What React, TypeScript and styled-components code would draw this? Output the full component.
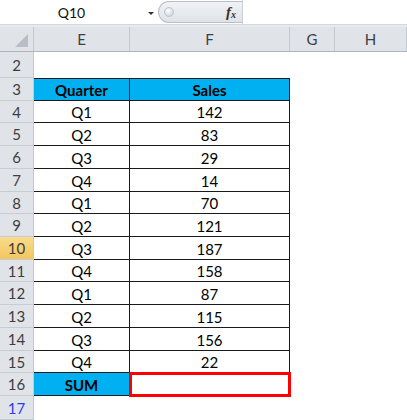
import React from "react";
import styled, { createGlobalStyle } from "styled-components";

const GlobalStyle = createGlobalStyle`
  html, body { margin: 0; padding: 0; background: #ffffff; }
  body { font-family: Lato, "Open Sans", sans-serif; overflow: hidden; }
  * { box-sizing: border-box; }
`;

const Page = styled.div`
  width: 407px;
  height: 420px;
  overflow: hidden;
  background: #ffffff;
  display: flex;
  flex-direction: column;
`;

const FormulaBar = styled.div`
  height: 25px;
  display: flex;
  align-items: stretch;
  border-bottom: 1px solid #d3d8de;
  background: #ffffff;
`;

const NameBox = styled.div`
  width: 143px;
  display: flex;
  align-items: center;
  justify-content: center;
  font-size: 14px;
  color: #111;
  padding-top: 1px;
`;

const Dropdown = styled.div`
  width: 15px;
  display: flex;
  align-items: center;
  justify-content: center;
  &::after {
    content: "";
    border-left: 3px solid transparent;
    border-right: 3px solid transparent;
    border-top: 3px solid #333;
    margin-top: 2px;
  }
`;

const Capsule = styled.div`
  width: 84px;
  margin: 1px 0 1px 0;
  border-radius: 12px 0 0 12px;
  background: linear-gradient(#f0f2f5, #dfe3e8);
  border: 1px solid #b9bfc7;
  border-right: none;
  display: flex;
  align-items: center;
  justify-content: space-between;
  padding: 0 6px 0 5px;
`;

const Knob = styled.div`
  width: 10px;
  height: 10px;
  border-radius: 50%;
  background: radial-gradient(circle at 40% 35%, #ffffff, #c4c9cf);
  border: 1px solid #bfc4ca;
`;

const Fx = styled.span`
  font-family: "Liberation Serif", serif;
  font-style: italic;
  font-weight: bold;
  font-size: 15px;
  color: #333;
  & sub {
    font-size: 10px;
    vertical-align: -1px;
  }
`;

const FormulaInput = styled.div`
  flex: 1;
  border-left: 1px solid #c9ced5;
`;

const Gap = styled.div`
  height: 2px;
  background: #e7ebf0;
`;

const COLS = "34px 96px 160px 45px 1fr";

const HeaderRow = styled.div`
  display: grid;
  grid-template-columns: ${COLS};
  height: 25px;
  background: #e0e4e9;
  border-bottom: 1px solid #aeb5be;
`;

const Corner = styled.div`
  position: relative;
  border-right: 1px solid #c3c9d1;
  &::after {
    content: "";
    position: absolute;
    right: 5px;
    bottom: 4px;
    width: 0;
    height: 0;
    border-left: 13px solid transparent;
    border-bottom: 13px solid #b9bec5;
  }
`;

const ColHead = styled.div`
  display: flex;
  align-items: center;
  justify-content: center;
  font-size: 15px;
  color: #3a3f45;
  border-right: 1px solid #c3c9d1;
`;

const Row = styled.div<{ $h: number }>`
  display: grid;
  grid-template-columns: ${COLS};
  height: ${(p) => p.$h}px;
`;

const RowHead = styled.div<{ $active?: boolean; $blue?: boolean }>`
  display: flex;
  align-items: center;
  justify-content: center;
  font-size: 15px;
  color: ${(p) => (p.$blue ? "#2b3cf0" : "#3d3d3d")};
  background: ${(p) =>
    p.$active ? "linear-gradient(#f9dc8c, #f3c660)" : "#e0e4e9"};
  border-right: 1px solid #c3c9d1;
  border-bottom: 1px solid #c6ccd3;
`;

const Cell = styled.div<{
  $table?: boolean;
  $first?: boolean;
  $blue?: boolean;
  $bold?: boolean;
  $selected?: boolean;
}>`
  position: relative;
  display: flex;
  align-items: center;
  justify-content: center;
  font-size: 15px;
  color: #000;
  font-weight: ${(p) => (p.$bold ? 700 : 400)};
  background: ${(p) => (p.$blue ? "#00b0f0" : "#ffffff")};
  border-right: ${(p) => (p.$table ? "1px solid #1a1a1a" : "none")};
  border-bottom: ${(p) => (p.$table ? "1px solid #1a1a1a" : "none")};
  border-top: ${(p) => (p.$first ? "1px solid #1a1a1a" : "none")};
  padding-top: 1px;
  ${(p) =>
    p.$selected
      ? `outline: 3px solid #ff0000; outline-offset: -2px; z-index: 1;`
      : ""}
`;

const data: [string, number][] = [
  ["Q1", 142],
  ["Q2", 83],
  ["Q3", 29],
  ["Q4", 14],
  ["Q1", 70],
  ["Q2", 121],
  ["Q3", 187],
  ["Q4", 158],
  ["Q1", 87],
  ["Q2", 115],
  ["Q3", 156],
  ["Q4", 22],
];

// row boundaries from y=78 to y=396
const bounds = [78, 101, 123, 146, 169, 192, 214, 237, 260, 282, 305, 328, 351, 373, 396];
const heights = bounds.slice(1).map((b, i) => b - bounds[i]);

export default function App() {
  return (
    <Page>
      <GlobalStyle />
      <FormulaBar>
        <NameBox>Q10</NameBox>
        <Dropdown />
        <Capsule>
          <Knob />
          <Fx>
            f<sub>x</sub>
          </Fx>
        </Capsule>
        <FormulaInput />
      </FormulaBar>
      <Gap />
      <HeaderRow>
        <Corner />
        <ColHead>E</ColHead>
        <ColHead>F</ColHead>
        <ColHead>G</ColHead>
        <ColHead>H</ColHead>
      </HeaderRow>
      <Row $h={26}>
        <RowHead>2</RowHead>
        <Cell />
        <Cell />
        <Cell />
        <Cell />
      </Row>
      <Row $h={heights[0]}>
        <RowHead>3</RowHead>
        <Cell $table $first $blue $bold>
          Quarter
        </Cell>
        <Cell $table $first $blue $bold>
          Sales
        </Cell>
        <Cell />
        <Cell />
      </Row>
      {data.map(([q, s], i) => (
        <Row key={i} $h={heights[i + 1]}>
          <RowHead $active={i + 4 === 10}>{i + 4}</RowHead>
          <Cell $table>{q}</Cell>
          <Cell $table>{s}</Cell>
          <Cell />
          <Cell />
        </Row>
      ))}
      <Row $h={heights[13]}>
        <RowHead>16</RowHead>
        <Cell $table $blue $bold>
          SUM
        </Cell>
        <Cell $table $selected />
        <Cell />
        <Cell />
      </Row>
      <Row $h={24}>
        <RowHead $blue>17</RowHead>
        <Cell />
        <Cell />
        <Cell />
        <Cell />
      </Row>
    </Page>
  );
}
